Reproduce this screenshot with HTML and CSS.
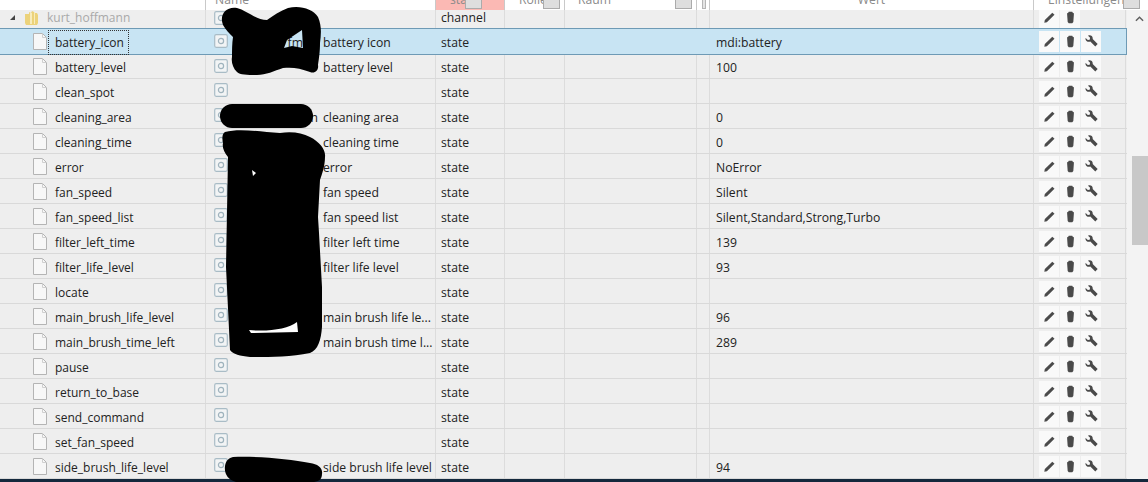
FILE: index.html
```html
<!DOCTYPE html>
<html lang="de">
<head>
<meta charset="utf-8">
<title>Objekte</title>
<link rel="stylesheet" href="styles.css">
</head>
<body>
<svg class="defs" width="0" height="0" aria-hidden="true">
  <symbol id="i-file" viewBox="0 0 14 17"><path d="M.5.5h9l4 4v12H.5z" fill="#f7f7f7" stroke="#b4b4b4"/><path d="M9.5.5v4h4" fill="none" stroke="#cfcfcf"/></symbol>
  <symbol id="i-obj" viewBox="0 0 14 14"><rect x=".7" y=".7" width="12.6" height="12.6" rx="1.5" fill="#f2f4f5" stroke="#a9bcc6" stroke-width="1.2"/><circle cx="7" cy="7" r="2.6" fill="none" stroke="#9fb3bd" stroke-width="1.2"/></symbol>
  <symbol id="i-pen" viewBox="0 0 12 12"><path d="M1.200 10.800l.5-2.400L8.600 1.500l2 2L3.600 10.300z" fill="#4a4a4a"/></symbol>
  <symbol id="i-trash" viewBox="0 0 12 12"><path d="M4.400 .8h3.200l.5.700 1 .5v1.400l-.5 6.800-1 1.200H4.400l-1-1.200-.5-6.800V2l1-.5z" fill="#4a4a4a"/></symbol>
  <symbol id="i-wrench" viewBox="0 0 12 12"><path d="M.6 2.800 2.600 4.700 4.300 4.300 4.700 2.600 2.800.6C5-.4 7.500 1 7.100 3.700L11.700 8.300 9.500 10.700 4.900 6.100C2.200 6.900-.2 5 .6 2.800z" fill="#4a4a4a"/></symbol>
</svg>

<div class="app">
  <div class="head">
    <div class="hcell"></div>
    <div class="hcell name-h">Name</div>
    <div class="hcell type-h">sta<span class="fbtn fbtn-type"></span></div>
    <div class="hcell role-h">Rolle<span class="fbtn"></span></div>
    <div class="hcell room-h">Raum<span class="fbtn"></span></div>
    <div class="hcell"><span class="grip"></span></div>
    <div class="hcell value-h">Wert</div>
    <div class="hcell set-h">Einstellungen<span class="fbtn fbtn-set"></span></div>
  </div>

  <div class="main">
    <div class="rows">
      <div class="row row-top">
        <div class="cell id"><span class="tri"></span><svg class="folder" viewBox="0 0 13 14"><path d="M0 3h4V1l2 1 1-2 2 1 1 1h2l1 2v8l-1 2H1l-1-2z" fill="#ecd27a"/><path d="M5 2h2v11H5zM9 1h1v12H9z" fill="#f8ecbc"/></svg><span class="muted">kurt_hoffmann</span></div>
        <div class="cell"><svg class="obj"><use href="#i-obj"/></svg></div>
        <div class="cell type">channel</div><div class="cell"></div><div class="cell"></div><div class="cell"></div><div class="cell"></div>
        <div class="cell acts"><span class="act"><svg><use href="#i-pen"/></svg></span><span class="act"><svg><use href="#i-trash"/></svg></span></div>
      </div>

      <div class="row row-sel">
        <div class="cell id"><svg class="file"><use href="#i-file"/></svg><span class="focus">battery_icon</span></div>
        <div class="cell"><svg class="obj"><use href="#i-obj"/></svg><span class="pre pre-gap">fm</span><span class="nm">battery icon</span></div>
        <div class="cell type">state</div><div class="cell"></div><div class="cell"></div><div class="cell"></div><div class="cell val">mdi:battery</div>
        <div class="cell acts"><span class="act"><svg><use href="#i-pen"/></svg></span><span class="act"><svg><use href="#i-trash"/></svg></span><span class="act"><svg><use href="#i-wrench"/></svg></span></div>
      </div>

      <div class="row">
        <div class="cell id"><svg class="file"><use href="#i-file"/></svg>battery_level</div>
        <div class="cell"><svg class="obj"><use href="#i-obj"/></svg><span class="pre"></span><span class="nm">battery level</span></div>
        <div class="cell type">state</div><div class="cell"></div><div class="cell"></div><div class="cell"></div><div class="cell val">100</div>
        <div class="cell acts"><span class="act"><svg><use href="#i-pen"/></svg></span><span class="act"><svg><use href="#i-trash"/></svg></span><span class="act"><svg><use href="#i-wrench"/></svg></span></div>
      </div>

      <div class="row">
        <div class="cell id"><svg class="file"><use href="#i-file"/></svg>clean_spot</div>
        <div class="cell"><svg class="obj"><use href="#i-obj"/></svg></div>
        <div class="cell type">state</div><div class="cell"></div><div class="cell"></div><div class="cell"></div><div class="cell val"></div>
        <div class="cell acts"><span class="act"><svg><use href="#i-pen"/></svg></span><span class="act"><svg><use href="#i-trash"/></svg></span><span class="act"><svg><use href="#i-wrench"/></svg></span></div>
      </div>

      <div class="row">
        <div class="cell id"><svg class="file"><use href="#i-file"/></svg>cleaning_area</div>
        <div class="cell"><svg class="obj"><use href="#i-obj"/></svg><span class="pre">n</span><span class="nm">cleaning area</span></div>
        <div class="cell type">state</div><div class="cell"></div><div class="cell"></div><div class="cell"></div><div class="cell val">0</div>
        <div class="cell acts"><span class="act"><svg><use href="#i-pen"/></svg></span><span class="act"><svg><use href="#i-trash"/></svg></span><span class="act"><svg><use href="#i-wrench"/></svg></span></div>
      </div>

      <div class="row">
        <div class="cell id"><svg class="file"><use href="#i-file"/></svg>cleaning_time</div>
        <div class="cell"><svg class="obj"><use href="#i-obj"/></svg><span class="pre"></span><span class="nm">cleaning time</span></div>
        <div class="cell type">state</div><div class="cell"></div><div class="cell"></div><div class="cell"></div><div class="cell val">0</div>
        <div class="cell acts"><span class="act"><svg><use href="#i-pen"/></svg></span><span class="act"><svg><use href="#i-trash"/></svg></span><span class="act"><svg><use href="#i-wrench"/></svg></span></div>
      </div>

      <div class="row">
        <div class="cell id"><svg class="file"><use href="#i-file"/></svg>error</div>
        <div class="cell"><svg class="obj"><use href="#i-obj"/></svg><span class="pre"></span><span class="nm">error</span></div>
        <div class="cell type">state</div><div class="cell"></div><div class="cell"></div><div class="cell"></div><div class="cell val">NoError</div>
        <div class="cell acts"><span class="act"><svg><use href="#i-pen"/></svg></span><span class="act"><svg><use href="#i-trash"/></svg></span><span class="act"><svg><use href="#i-wrench"/></svg></span></div>
      </div>

      <div class="row">
        <div class="cell id"><svg class="file"><use href="#i-file"/></svg>fan_speed</div>
        <div class="cell"><svg class="obj"><use href="#i-obj"/></svg><span class="pre">n</span><span class="nm">fan speed</span></div>
        <div class="cell type">state</div><div class="cell"></div><div class="cell"></div><div class="cell"></div><div class="cell val">Silent</div>
        <div class="cell acts"><span class="act"><svg><use href="#i-pen"/></svg></span><span class="act"><svg><use href="#i-trash"/></svg></span><span class="act"><svg><use href="#i-wrench"/></svg></span></div>
      </div>

      <div class="row">
        <div class="cell id"><svg class="file"><use href="#i-file"/></svg>fan_speed_list</div>
        <div class="cell"><svg class="obj"><use href="#i-obj"/></svg><span class="pre">n</span><span class="nm">fan speed list</span></div>
        <div class="cell type">state</div><div class="cell"></div><div class="cell"></div><div class="cell"></div><div class="cell val">Silent,Standard,Strong,Turbo</div>
        <div class="cell acts"><span class="act"><svg><use href="#i-pen"/></svg></span><span class="act"><svg><use href="#i-trash"/></svg></span><span class="act"><svg><use href="#i-wrench"/></svg></span></div>
      </div>

      <div class="row">
        <div class="cell id"><svg class="file"><use href="#i-file"/></svg>filter_left_time</div>
        <div class="cell"><svg class="obj"><use href="#i-obj"/></svg><span class="pre"></span><span class="nm">filter left time</span></div>
        <div class="cell type">state</div><div class="cell"></div><div class="cell"></div><div class="cell"></div><div class="cell val">139</div>
        <div class="cell acts"><span class="act"><svg><use href="#i-pen"/></svg></span><span class="act"><svg><use href="#i-trash"/></svg></span><span class="act"><svg><use href="#i-wrench"/></svg></span></div>
      </div>

      <div class="row">
        <div class="cell id"><svg class="file"><use href="#i-file"/></svg>filter_life_level</div>
        <div class="cell"><svg class="obj"><use href="#i-obj"/></svg><span class="pre"></span><span class="nm">filter life level</span></div>
        <div class="cell type">state</div><div class="cell"></div><div class="cell"></div><div class="cell"></div><div class="cell val">93</div>
        <div class="cell acts"><span class="act"><svg><use href="#i-pen"/></svg></span><span class="act"><svg><use href="#i-trash"/></svg></span><span class="act"><svg><use href="#i-wrench"/></svg></span></div>
      </div>

      <div class="row">
        <div class="cell id"><svg class="file"><use href="#i-file"/></svg>locate</div>
        <div class="cell"><svg class="obj"><use href="#i-obj"/></svg></div>
        <div class="cell type">state</div><div class="cell"></div><div class="cell"></div><div class="cell"></div><div class="cell val"></div>
        <div class="cell acts"><span class="act"><svg><use href="#i-pen"/></svg></span><span class="act"><svg><use href="#i-trash"/></svg></span><span class="act"><svg><use href="#i-wrench"/></svg></span></div>
      </div>

      <div class="row">
        <div class="cell id"><svg class="file"><use href="#i-file"/></svg>main_brush_life_level</div>
        <div class="cell"><svg class="obj"><use href="#i-obj"/></svg><span class="pre"></span><span class="nm">main brush life le...</span></div>
        <div class="cell type">state</div><div class="cell"></div><div class="cell"></div><div class="cell"></div><div class="cell val">96</div>
        <div class="cell acts"><span class="act"><svg><use href="#i-pen"/></svg></span><span class="act"><svg><use href="#i-trash"/></svg></span><span class="act"><svg><use href="#i-wrench"/></svg></span></div>
      </div>

      <div class="row">
        <div class="cell id"><svg class="file"><use href="#i-file"/></svg>main_brush_time_left</div>
        <div class="cell"><svg class="obj"><use href="#i-obj"/></svg><span class="pre"></span><span class="nm">main brush time l...</span></div>
        <div class="cell type">state</div><div class="cell"></div><div class="cell"></div><div class="cell"></div><div class="cell val">289</div>
        <div class="cell acts"><span class="act"><svg><use href="#i-pen"/></svg></span><span class="act"><svg><use href="#i-trash"/></svg></span><span class="act"><svg><use href="#i-wrench"/></svg></span></div>
      </div>

      <div class="row">
        <div class="cell id"><svg class="file"><use href="#i-file"/></svg>pause</div>
        <div class="cell"><svg class="obj"><use href="#i-obj"/></svg></div>
        <div class="cell type">state</div><div class="cell"></div><div class="cell"></div><div class="cell"></div><div class="cell val"></div>
        <div class="cell acts"><span class="act"><svg><use href="#i-pen"/></svg></span><span class="act"><svg><use href="#i-trash"/></svg></span><span class="act"><svg><use href="#i-wrench"/></svg></span></div>
      </div>

      <div class="row">
        <div class="cell id"><svg class="file"><use href="#i-file"/></svg>return_to_base</div>
        <div class="cell"><svg class="obj"><use href="#i-obj"/></svg></div>
        <div class="cell type">state</div><div class="cell"></div><div class="cell"></div><div class="cell"></div><div class="cell val"></div>
        <div class="cell acts"><span class="act"><svg><use href="#i-pen"/></svg></span><span class="act"><svg><use href="#i-trash"/></svg></span><span class="act"><svg><use href="#i-wrench"/></svg></span></div>
      </div>

      <div class="row">
        <div class="cell id"><svg class="file"><use href="#i-file"/></svg>send_command</div>
        <div class="cell"><svg class="obj"><use href="#i-obj"/></svg></div>
        <div class="cell type">state</div><div class="cell"></div><div class="cell"></div><div class="cell"></div><div class="cell val"></div>
        <div class="cell acts"><span class="act"><svg><use href="#i-pen"/></svg></span><span class="act"><svg><use href="#i-trash"/></svg></span><span class="act"><svg><use href="#i-wrench"/></svg></span></div>
      </div>

      <div class="row">
        <div class="cell id"><svg class="file"><use href="#i-file"/></svg>set_fan_speed</div>
        <div class="cell"><svg class="obj"><use href="#i-obj"/></svg></div>
        <div class="cell type">state</div><div class="cell"></div><div class="cell"></div><div class="cell"></div><div class="cell val"></div>
        <div class="cell acts"><span class="act"><svg><use href="#i-pen"/></svg></span><span class="act"><svg><use href="#i-trash"/></svg></span><span class="act"><svg><use href="#i-wrench"/></svg></span></div>
      </div>

      <div class="row">
        <div class="cell id"><svg class="file"><use href="#i-file"/></svg>side_brush_life_level</div>
        <div class="cell"><svg class="obj"><use href="#i-obj"/></svg><span class="pre"></span><span class="nm">side brush life level</span></div>
        <div class="cell type">state</div><div class="cell"></div><div class="cell"></div><div class="cell"></div><div class="cell val">94</div>
        <div class="cell acts"><span class="act"><svg><use href="#i-pen"/></svg></span><span class="act"><svg><use href="#i-trash"/></svg></span><span class="act"><svg><use href="#i-wrench"/></svg></span></div>
      </div>
    </div>

    <div class="scrollbar">
      <svg class="arrow" viewBox="0 0 10 6"><path d="M1 5l4-4 4 4" fill="none" stroke="#606060" stroke-width="1.600"/></svg>
      <div class="thumb"></div>
    </div>
  </div>

  <div class="foot"></div>

  <svg class="scribble" viewBox="0 0 1148 482" aria-hidden="true">
    <path fill-rule="evenodd" d="M223 25C219 15 226 6 237 8C246 10 256 20 267 20C274 15 280 11 288 8C300 5 313 9 318 17C322 26 321 35 320 43C320 52 319 58 318 65C319 70 315 74 310 72C300 68 292 67 283 68C274 71 266 75 257 75C248 75 240 75 237 72C233 68 231 62 232 57C232 50 232 44 233 37C229 33 226 30 223 25ZM284 48 287 40 302 30 303 48 292 46Z" fill="#000"/>
    <path d="M232 116H301" stroke="#000" stroke-width="24" stroke-linecap="round"/>
    <path d="M225 132C240 128 260 132 280 133C292 131 302 133 310 137C320 142 326 150 325 157C325 166 322 174 320 180L318 217 319 233 322 287 322 327C321 340 318 350 310 353C290 357 270 357 250 357C240 356 233 354 230 350L226 267 228 157C224 152 222 147 223 143C222 138 222 134 225 132Z" fill="#000"/>
    <path d="M252 170 256 173 253 176Z" fill="#fff"/>
    <path d="M249 330C268 332 288 329 297 322L298 332 251 333Z" fill="#fff"/>
    <path d="M233 457C258 456 290 459 310 463C318 464 323 468 322 474C322 480 318 482 312 482H236C228 480 224 474 225 466C226 460 229 458 233 457Z" fill="#000"/>
  </svg>
</div>
</body>
</html>
```

FILE: styles.css
```css
* { box-sizing: border-box; }

html, body {
  margin: 0;
  padding: 0;
  background: #f0f0f0;
}

.defs { position: absolute; }

.app {
  position: relative;
  width: 1148px;
  height: 482px;
  overflow: hidden;
  display: flex;
  flex-direction: column;
  font-family: "Open Sans", "Noto Sans", sans-serif;
  font-size: 12.2px;
  color: #222;
}

.head {
  flex: 0 0 10px;
  min-height: 0;
  display: grid;
  grid-template-columns: 206px 230px 69px 60px 132px 13px 324px 114px;
  grid-template-rows: 10px;
  background: #fff;
  color: #8a8a8a;
}

.hcell {
  position: relative;
  height: 10px;
  overflow: hidden;
  line-height: 0;
  border-right: 1px solid #c9c9c9;
}

.name-h { padding-left: 9px; }
.type-h { background: #fbb9b4; padding-left: 14px; }
.role-h { padding-left: 14px; }
.room-h { padding-left: 13px; }
.value-h { text-align: center; }
.set-h { padding-left: 14px; border-right: 0; }

.fbtn {
  position: absolute;
  top: -1px;
  right: 4px;
  width: 17px;
  height: 10px;
  background: #dedede;
  border: 1px solid #ababab;
}

.fbtn-type { right: 22px; }
.fbtn-set { right: 8px; }

.grip {
  position: absolute;
  top: -1px;
  left: 5px;
  width: 4px;
  height: 10px;
  background: #e4e4e4;
  border: 1px solid #b5b5b5;
}

.main {
  flex: 1;
  min-height: 0;
  display: flex;
}

.rows {
  flex: 0 0 1126px;
  display: flex;
  flex-direction: column;
  background: #eeeeee;
}

.row {
  flex: 0 0 25px;
  min-height: 0;
  display: grid;
  grid-template-columns: 206px 230px 69px 60px 132px 13px 324px 92px;
  border-bottom: 1px solid #d9d9d9;
}

.row-top {
  flex-basis: 19px;
  border-bottom: 1px solid #6e9ab5;
}

.row-sel {
  flex-basis: 26px;
  background: #c8e4f3;
  border-bottom: 1px solid #6e9ab5;
  border-right: 1px solid #6e9ab5;
}

.row-sel + .row { flex-basis: 24px; }

.cell {
  display: flex;
  align-items: center;
  min-width: 0;
  min-height: 0;
  padding-top: 2px;
  white-space: nowrap;
  border-right: 1px solid #dcdcdc;
}

.row-sel .cell { border-right-color: #c8e4f3; }
.row-sel .acts { border-right: 0; }

.id {
  padding-left: 33px;
  font-size: 12px;
}

.file {
  flex: none;
  width: 14px;
  height: 17px;
  margin-right: 8px;
  margin-top: -2px;
}

.tri {
  flex: none;
  width: 0;
  height: 0;
  border-bottom: 5px solid #444;
  border-left: 5px solid transparent;
  margin-right: 10px;
}

.folder {
  flex: none;
  width: 13px;
  height: 14px;
  margin-right: 9px;
}

.muted { color: #a9a9a9; }

.focus {
  outline: 1px dotted #333;
  padding: 3px 4px 3px 6px;
  margin-left: -6px;
}

.obj {
  flex: none;
  width: 14px;
  height: 14px;
  margin-left: 8px;
  margin-top: -4px;
}

.pre {
  flex: none;
  width: 88px;
  margin-left: 2px;
  text-align: right;
}

.pre-gap { padding-right: 15px; }

.nm { margin-left: 5px; }
.type { padding-left: 5px; }
.val { padding-left: 6px; }

.acts {
  padding-left: 5px;
  padding-top: 0;
  gap: 1px;
}

.act {
  width: 20px;
  height: 21px;
  background: #f9f9f9;
  display: flex;
  align-items: center;
  justify-content: center;
}

.act svg {
  width: 13px;
  height: 13px;
}

/* Clipped first row: its content sits above the vertical centre */
.row-top .cell {
  padding-top: 0;
  padding-bottom: 3px;
}

.row-top .id { padding-left: 10px; }
.row-top .obj { margin-top: 0; }
.row-top .acts { padding-bottom: 0; }

.row-top .act {
  height: 18px;
  padding-bottom: 3px;
}

.scrollbar {
  flex: 1;
  padding: 6px 1px 0 5px;
  background: #f3f3f3;
}

.arrow {
  display: block;
  width: 9px;
  height: 6px;
  margin-left: 3px;
}

.thumb {
  width: 16px;
  height: 89px;
  margin-top: 134px;
  background: #c8c8c8;
}

.foot {
  flex: 0 0 3px;
  background: #14283c;
}

.scribble {
  position: absolute;
  inset: 0;
  width: 1148px;
  height: 482px;
  pointer-events: none;
}
```
